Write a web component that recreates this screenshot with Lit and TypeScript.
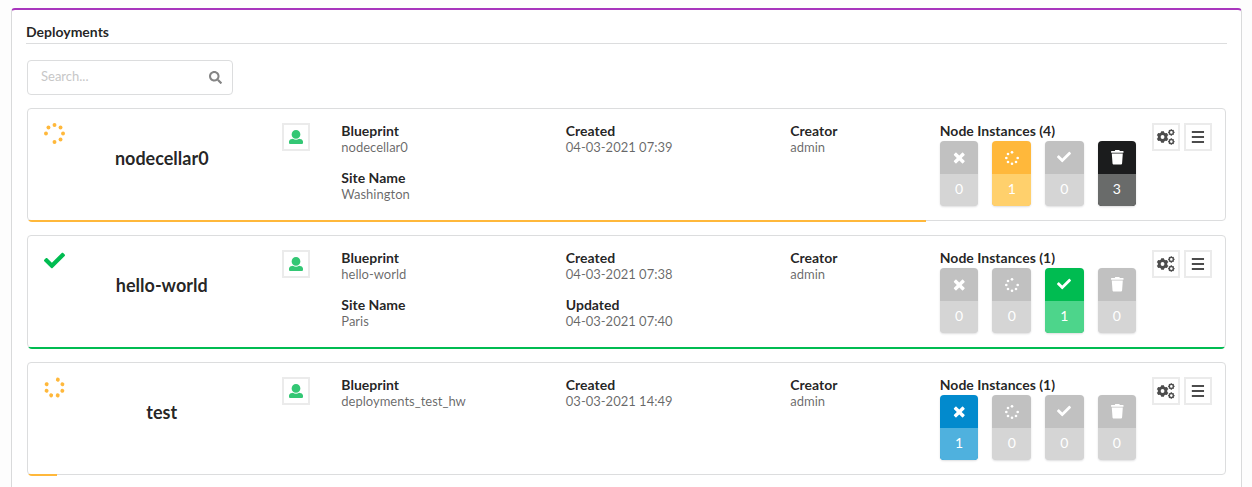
import { LitElement, html, css, svg, nothing } from "lit";
import { customElement, property } from "lit/decorators.js";

type Group = { label: string; value: string };
type Deployment = {
  name: string;
  status: "progress" | "done";
  turn: number;
  progress: number;
  blueprint: Group[];
  dates: Group[];
  creator: string;
  counts: number[];
};

const deployments: Deployment[] = [
  {
    name: "nodecellar0",
    status: "progress",
    turn: -180,
    progress: 75,
    blueprint: [
      { label: "Blueprint", value: "nodecellar0" },
      { label: "Site Name", value: "Washington" },
    ],
    dates: [{ label: "Created", value: "04-03-2021 07:39" }],
    creator: "admin",
    counts: [0, 1, 0, 3],
  },
  {
    name: "hello-world",
    status: "done",
    turn: 0,
    progress: 100,
    blueprint: [
      { label: "Blueprint", value: "hello-world" },
      { label: "Site Name", value: "Paris" },
    ],
    dates: [
      { label: "Created", value: "04-03-2021 07:38" },
      { label: "Updated", value: "04-03-2021 07:40" },
    ],
    creator: "admin",
    counts: [0, 0, 1, 0],
  },
  {
    name: "test",
    status: "progress",
    turn: -67,
    progress: 2.4,
    blueprint: [{ label: "Blueprint", value: "deployments_test_hw" }],
    dates: [{ label: "Created", value: "03-03-2021 14:49" }],
    creator: "admin",
    counts: [1, 0, 0, 0],
  },
];

/** Outline of a toothed wheel with a round hole. */
function gear(cx: number, cy: number, outer: number, inner: number, hole: number, teeth: number, start: number) {
  const pts: string[] = [];
  const step = (Math.PI * 2) / teeth;
  for (let i = 0; i < teeth; i++) {
    const a = start + i * step;
    for (const [r, t] of [[inner, -0.32], [outer, -0.22], [outer, 0.22], [inner, 0.32]]) {
      pts.push(`${(cx + r * Math.cos(a + t * step)).toFixed(2)} ${(cy + r * Math.sin(a + t * step)).toFixed(2)}`);
    }
  }
  return `M${pts.join("L")}Z M${cx - hole} ${cy}a${hole} ${hole} 0 1 0 ${hole * 2} 0a${hole} ${hole} 0 1 0 ${-hole * 2} 0Z`;
}

const shapes: Record<string, { w: number; h: number; d: string }> = {
  check: { w: 512, h: 512, d: "M173.898 439.404l-166.4-166.4c-9.997-9.997-9.997-26.206 0-36.204l36.203-36.204c9.997-9.998 26.207-9.998 36.204 0L192 312.69 432.095 72.596c9.997-9.997 26.207-9.997 36.204 0l36.203 36.204c9.997 9.997 9.997 26.206 0 36.204l-294.4 294.401c-9.998 9.997-26.207 9.997-36.204-.001z" },
  search: { w: 512, h: 512, d: "M505 442.7L405.3 343c-4.5-4.5-10.6-7-17-7H372c27.6-35.3 44-79.7 44-128C416 93.1 322.9 0 208 0S0 93.1 0 208s93.1 208 208 208c48.3 0 92.7-16.4 128-44v16.3c0 6.4 2.5 12.5 7 17l99.7 99.7c9.4 9.4 24.6 9.4 33.9 0l28.3-28.3c9.4-9.4 9.4-24.6.1-34zM208 336c-70.7 0-128-57.2-128-128 0-70.7 57.2-128 128-128 70.7 0 128 57.2 128 128 0 70.7-57.2 128-128 128z" },
  user: { w: 512, h: 512, d: "M256 0c88.366 0 160 71.634 160 160s-71.634 160-160 160S96 248.366 96 160 167.634 0 256 0zm183.283 333.821l-71.313-17.828c-74.923 53.89-165.738 41.864-223.94 0l-71.313 17.828C29.981 344.505 0 382.903 0 426.955V464c0 26.51 21.49 48 48 48h416c26.51 0 48-21.49 48-48v-37.045c0-44.052-29.981-82.45-72.717-93.134z" },
  trash: { w: 448, h: 512, d: "M0 84V56c0-13.300 10.700-24 24-24h112l9.400-18.700c4-8.200 12.300-13.300 21.400-13.300h114.300c9.100 0 17.400 5.100 21.500 13.300L312 32h112c13.300 0 24 10.700 24 24v28c0 6.600-5.400 12-12 12H12C5.400 96 0 90.600 0 84zm420 44l-25 339c-2 25-22 45-48 45H101c-26 0-46-20-48-45L28 128z" },
  times: { w: 384, h: 512, d: "M330 449l55-55c9-9 9-25 0-34L281 256l104-104c9-9 9-25 0-34L330 63c-9-9-25-9-34 0L192 167 88 63c-9-9-25-9-34 0L-1 118c-9 9-9 25 0 34l104 104L-1 360c-9 9-9 25 0 34L54 449c9 9 25 9 34 0l104-104 104 104c9 9 25 9 34 0z" },
  bars: { w: 448, h: 512, d: "M-6 40h446v70H-6zM-6 221h446v70H-6zM-6 402h446v70H-6z" },
  cogs: {
    w: 640,
    h: 512,
    d: gear(203, 256, 220, 176, 70, 6, Math.PI / 2) + gear(524, 88, 120, 104, 48, 8, 0) + gear(524, 424, 120, 104, 48, 8, 0),
  },
};

function icon(name: string, size: number) {
  const s = shapes[name];
  return html`<svg class="icon" width=${(size * s.w) / 512} height=${size} viewBox="0 0 ${s.w} ${s.h}">
    <path fill="currentColor" fill-rule="evenodd" d=${s.d}></path>
  </svg>`;
}

/** Ring of seven dots with a gap at the upper right, turned by the given angle. */
function spinner(size: number, turn = 0) {
  const dots = [0, 90, 135, 180, 225, 270, 315].map((deg) => {
    const a = ((deg - 90) * Math.PI) / 180;
    return svg`<circle cx=${256 + 208 * Math.cos(a)} cy=${256 + 208 * Math.sin(a)} r="48"></circle>`;
  });
  return html`<svg class="icon" width=${size} height=${size} viewBox="0 0 512 512">
    <g fill="currentColor" transform="rotate(${turn} 256 256)">${dots}</g>
  </svg>`;
}

@customElement("node-state")
class NodeState extends LitElement {
  @property() kind = "times";
  @property({ type: Number }) count = 0;

  static styles = css`
    :host { display: block; width: 38.6px; height: 65px; }
    .box { height: 65px; border-radius: 4px; overflow: hidden; box-shadow: 0 1px 2px rgba(34, 36, 38, 0.15); color: #fff; background: #c1c1c1; }
    .head { height: 33px; box-sizing: border-box; display: flex; align-items: center; justify-content: center; }
    .times .head { padding-left: 1px; }
    .check .head { padding-bottom: 1px; }
    .count { height: 32px; display: flex; align-items: center; justify-content: center; background: rgba(255, 255, 255, 0.33); font-size: 14px; box-sizing: border-box; padding-bottom: 2px; }
    .icon { display: block; overflow: visible; }
    .active.times { background: #028acd; }
    .active.spinner { background: #ffb83b; }
    .active.check { background: #00bc51; }
    .active.trash { background: #1b1c1d; }
    .active.times .count { background: #4fb1de; }
    .active.spinner .count { background: #ffd06c; }
    .active.check .count { background: #4dd58b; }
    .active.trash .count { background: #696b6a; }
  `;

  render() {
    return html`<div class="box ${this.kind} ${this.count ? "active" : ""}">
      <div class="head">${this.kind === "spinner" ? spinner(14) : icon(this.kind, this.kind === "trash" ? 14.4 : 14)}</div>
      <div class="count">${this.count}</div>
    </div>`;
  }
}

@customElement("deployment-card")
class DeploymentCard extends LitElement {
  @property({ attribute: false }) item!: Deployment;

  static styles = css`
    :host { display: block; }
    .card { position: relative; box-sizing: border-box; height: 113px; border: 1px solid #dcddde; border-radius: 4px; display: grid; grid-template-columns: 313.3px 224.5px 224.5px 149.5px 1fr; padding: 14px 13px 0 0; background: #fff; }
    .lead { display: grid; grid-template-columns: 42px 183.500px 1fr; }
    .status { padding-left: 15.5px; }
    .status.progress { color: #ffb83b; }
    .status.done { color: #00bc51; }
    .name { padding-top: 24px; font-size: 18px; line-height: 23px; font-weight: 700; text-align: center; }
    .button { box-sizing: border-box; width: 28px; height: 28px; border: 2px solid #ebebeb; display: flex; align-items: center; justify-content: center; color: #4c4c4c; background: #fff; }
    .user { color: #33c774; margin-left: 28.5px; }
    .group { margin-bottom: 15px; line-height: 16px; }
    .label { font-weight: 700; }
    .value { color: rgba(0, 0, 0, 0.6); font-size: 13px; }
    .end { display: flex; justify-content: space-between; }
    .states { display: flex; gap: 14px; margin-top: 2px; }
    .actions { display: flex; gap: 4px; }
    .icon { display: block; overflow: visible; }
    .bar { position: absolute; left: 0; right: 0; bottom: -2px; height: 5px; overflow: hidden; border-radius: 0 0 4px 4px; display: flex; align-items: flex-end; }
    .fill { height: 2px; }
    .fill.progress { background: #ffb83b; }
    .fill.done { background: #00bc51; }
  `;

  private group(g: Group) {
    return html`<div class="group"><div class="label">${g.label}</div><div class="value">${g.value}</div></div>`;
  }

  render() {
    const d = this.item;
    if (!d) return nothing;
    const kinds = ["times", "spinner", "check", "trash"];
    const total = d.counts.reduce((a, b) => a + b, 0);
    return html`<div class="card">
      <div class="lead">
        <div class="status ${d.status}">${d.status === "done" ? icon("check", 21) : spinner(21, d.turn)}</div>
        <div class="name">${d.name}</div>
        <div><div class="button user">${icon("user", 14)}</div></div>
      </div>
      <div>${d.blueprint.map((g) => this.group(g))}</div>
      <div>${d.dates.map((g) => this.group(g))}</div>
      <div>${this.group({ label: "Creator", value: d.creator })}</div>
      <div class="end">
        <div class="group">
          <div class="label">Node Instances (${total})</div>
          <div class="states">${kinds.map((k, i) => html`<node-state kind=${k} .count=${d.counts[i]}></node-state>`)}</div>
        </div>
        <div class="actions">
          <div class="button">${icon("cogs", 14)}</div>
          <div class="button">${icon("bars", 14)}</div>
        </div>
      </div>
      <div class="bar"><div class="fill ${d.status}" style="width:${d.progress}%"></div></div>
    </div>`;
  }
}

@customElement("app-root")
class AppRoot extends LitElement {
  static styles = css`
    :host { display: block; box-sizing: border-box; height: 487px; overflow: hidden; padding: 8px 10px 0 11px; background: #fdfdfd; font-family: Lato, "Liberation Sans", sans-serif; font-size: 14px; color: rgba(0, 0, 0, 0.87); }
    .panel { box-sizing: border-box; height: 520px; padding: 14px 14px 0; border: 1px solid #d9dadb; border-top: 2px solid #a835bd; border-radius: 4px; background: #fff; }
    .title { height: 19px; line-height: 15px; border-bottom: 1px solid #dcddde; font-weight: 700; }
    .body { padding: 16px 1px 0; }
    .search { box-sizing: border-box; width: 206px; height: 35px; padding: 0 10px 3px 13px; border: 1px solid #dcddde; border-radius: 4px; display: flex; align-items: center; justify-content: space-between; font-size: 13px; color: #c7c7c7; }
    .search .icon { color: #858585; margin-top: 3px; }
    .list { display: flex; flex-direction: column; gap: 14px; margin-top: 13px; }
  `;

  render() {
    return html`<div class="panel">
      <div class="title">Deployments</div>
      <div class="body">
        <div class="search"><span>Search...</span>${icon("search", 13)}</div>
        <div class="list">${deployments.map((d) => html`<deployment-card .item=${d}></deployment-card>`)}</div>
      </div>
    </div>`;
  }
}
